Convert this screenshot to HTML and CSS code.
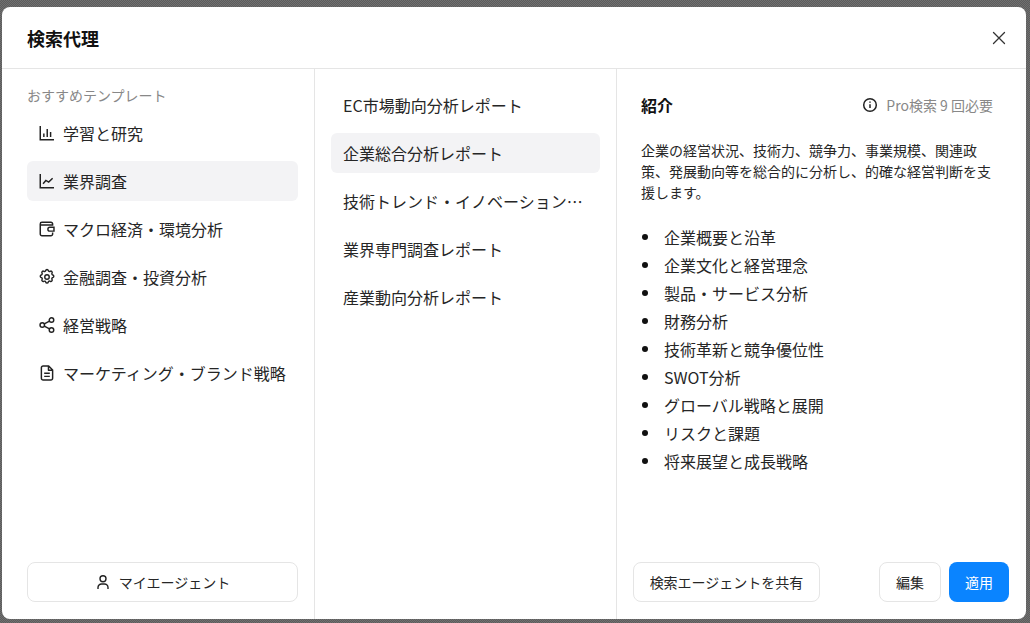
FILE: index.html
```html
<!DOCTYPE html>
<html lang="ja">
<head>
    <meta charset="UTF-8">
    <title>検索代理</title>
    <link rel="stylesheet" href="styles.css">
</head>
<body>
    <div class="modal">
        <div class="modal-header">
            <h2>検索代理</h2>
            <svg class="close-icon" width="20" height="20" viewBox="0 0 20 20" fill="none" stroke="#333" stroke-width="1.3" stroke-linecap="round"><path d="M4.500 4.500l11 11M15.500 4.500l-11 11"/></svg>
        </div>
        <div class="modal-body">
            <div class="col-left">
                <div class="section-label">おすすめテンプレート</div>
                <a class="cat-item">
                    <svg width="18" height="18" viewBox="0 0 16 16" fill="none" stroke="#222" stroke-width="1.3"><path d="M2 1.800V14h12.200M5.200 8.500v3M8.200 4.500v7M11.200 7v4.500"/></svg>
                    学習と研究
                </a>
                <a class="cat-item active">
                    <svg width="18" height="18" viewBox="0 0 16 16" fill="none" stroke="#222" stroke-width="1.3"><path d="M2 1.800V14h12.200M4.500 10.500l2.500-3 2.500 1.500 3.500-3.500"/></svg>
                    業界調査
                </a>
                <a class="cat-item">
                    <svg width="18" height="18" viewBox="0 0 16 16" fill="none" stroke="#222" stroke-width="1.3"><path d="M13 5V3.500A1.500 1.500 0 0 0 11.500 2h-8A1.500 1.500 0 0 0 2 3.500v9A1.500 1.500 0 0 0 3.500 14h8a1.500 1.500 0 0 0 1.500-1.500V11M2 4.500h11M14.200 6.500h-3.700a1.700 1.700 0 0 0 0 3.400h3.700z"/></svg>
                    マクロ経済・環境分析
                </a>
                <a class="cat-item">
                    <svg width="18" height="18" viewBox="0 0 24 24" fill="none" stroke="#222" stroke-width="1.900" stroke-linejoin="round"><path d="M10.300 3.300c.4-1.700 3-1.700 3.400 0a1.700 1.700 0 0 0 2.600 1.100c1.500-.9 3.300.8 2.400 2.400a1.700 1.700 0 0 0 1.100 2.500c1.700.4 1.700 3 0 3.400a1.700 1.700 0 0 0-1.100 2.600c.9 1.500-.8 3.300-2.400 2.400a1.700 1.700 0 0 0-2.600 1.100c-.4 1.700-3 1.700-3.400 0a1.700 1.700 0 0 0-2.500-1.100c-1.500.9-3.300-.8-2.400-2.400a1.700 1.700 0 0 0-1.100-2.600c-1.700-.4-1.700-3 0-3.400a1.700 1.700 0 0 0 1.100-2.500c-.9-1.500.8-3.300 2.400-2.400a1.700 1.700 0 0 0 2.500-1.100z"/><circle cx="12" cy="12" r="3"/></svg>
                    金融調査・投資分析
                </a>
                <a class="cat-item">
                    <svg width="18" height="18" viewBox="0 0 16 16" fill="none" stroke="#222" stroke-width="1.3"><circle cx="3.800" cy="8" r="2"/><circle cx="12" cy="3.600" r="2"/><circle cx="12" cy="12.400" r="2"/><path d="M5.600 7l4.600-2.500M5.600 9l4.600 2.500"/></svg>
                    経営戦略
                </a>
                <a class="cat-item">
                    <svg width="18" height="18" viewBox="0 0 16 16" fill="none" stroke="#222" stroke-width="1.3" stroke-linejoin="round"><path d="M9.500 1.800h-5A1.500 1.500 0 0 0 3 3.300v9.400a1.500 1.500 0 0 0 1.500 1.500h7a1.500 1.500 0 0 0 1.500-1.500V5.300zM9.300 2v3.500H13M5.500 8.300h5M5.500 11h5"/></svg>
                    マーケティング・ブランド戦略
                </a>
                <div class="col-footer">
                    <button class="btn btn-full">
                        <svg width="16" height="16" viewBox="0 0 16 16" fill="none" stroke="#222" stroke-width="1.4"><circle cx="8" cy="4.800" r="3"/><path d="M3 15v-1.500A3.500 3.500 0 0 1 6.500 10h3a3.500 3.500 0 0 1 3.500 3.500V15"/></svg>
                        マイエージェント
                    </button>
                </div>
            </div>
            <div class="col-mid">
                <a class="tpl-item">EC市場動向分析レポート</a>
                <a class="tpl-item active">企業総合分析レポート</a>
                <a class="tpl-item">技術トレンド・イノベーション分析レポート</a>
                <a class="tpl-item">業界専門調査レポート</a>
                <a class="tpl-item">産業動向分析レポート</a>
            </div>
            <div class="col-right">
                <div class="detail">
                    <div class="detail-head">
                        <h3>紹介</h3>
                        <div class="usage">
                            <svg width="16" height="16" viewBox="0 0 16 16" fill="none" stroke="#222" stroke-width="1.5"><circle cx="8" cy="8" r="6.300"/><path d="M8 7.300v3.700M8 4.600v1.200"/></svg>
                            Pro検索 9 回必要
                        </div>
                    </div>
                    <p class="desc">企業の経営状況、技術力、競争力、事業規模、関連政策、発展動向等を総合的に分析し、的確な経営判断を支援します。</p>
                    <ul class="outline">
                        <li>企業概要と沿革</li>
                        <li>企業文化と経営理念</li>
                        <li>製品・サービス分析</li>
                        <li>財務分析</li>
                        <li>技術革新と競争優位性</li>
                        <li>SWOT分析</li>
                        <li>グローバル戦略と展開</li>
                        <li>リスクと課題</li>
                        <li>将来展望と成長戦略</li>
                    </ul>
                </div>
                <div class="detail-footer">
                    <button class="btn btn-share">検索エージェントを共有</button>
                    <div class="footer-actions">
                        <button class="btn btn-edit">編集</button>
                        <button class="btn btn-apply">適用</button>
                    </div>
                </div>
            </div>
        </div>
    </div>
</body>
</html>
```

FILE: styles.css
```css
* {
    box-sizing: border-box;
}

body {
    margin: 0;
    height: 623px;
    overflow: hidden;
    padding: 7px 4px 4px 2px;
    background-color: #666;
    background-image: conic-gradient(#5c5c5c 25%, #707070 0 50%, #5c5c5c 0 75%, #707070 0);
    background-size: 2px 2px;
    font-family: "Noto Sans CJK JP", "Noto Sans", sans-serif;
    color: #262626;
}

.modal {
    height: 612px;
    display: flex;
    flex-direction: column;
    background-color: #fff;
    border-radius: 8px;
    overflow: hidden;
}

.modal-header {
    height: 62px;
    flex-shrink: 0;
    display: flex;
    align-items: center;
    justify-content: space-between;
    padding: 0 17px 0 25px;
    border-bottom: 1px solid #e5e5e5;
}

.modal-header h2 {
    margin: 0;
    font-size: 18px;
    font-weight: 700;
    color: #111;
}

.modal-body {
    flex: 1;
    display: flex;
    min-height: 0;
}

.col-left {
    width: 313px;
    display: flex;
    flex-direction: column;
    gap: 8px;
    padding: 16px 16px 17px 25px;
    border-right: 1px solid #e5e5e5;
}

.section-label {
    height: 20px;
    line-height: 20px;
    font-size: 14px;
    color: #888;
}

.cat-item {
    height: 40px;
    flex-shrink: 0;
    display: flex;
    align-items: center;
    gap: 7px;
    padding: 0 12px 0 11px;
    border-radius: 6px;
    font-size: 16px;
}

.cat-item svg {
    flex-shrink: 0;
}

.cat-item.active,
.tpl-item.active {
    background-color: #f3f3f5;
}

.col-footer {
    margin-top: auto;
}

.btn {
    height: 40px;
    display: flex;
    align-items: center;
    justify-content: center;
    gap: 8px;
    border: 1px solid #e5e5e5;
    border-radius: 8px;
    background-color: #fff;
    font-family: inherit;
    font-size: 14px;
    color: #262626;
}

.btn-full {
    width: 100%;
}

.col-mid {
    width: 302px;
    display: flex;
    flex-direction: column;
    gap: 8px;
    padding: 16px;
    border-right: 1px solid #e5e5e5;
}

.tpl-item {
    height: 40px;
    flex-shrink: 0;
    line-height: 40px;
    padding: 0 12px;
    border-radius: 6px;
    font-size: 16px;
    white-space: nowrap;
    overflow: hidden;
    text-overflow: ellipsis;
}

.col-right {
    flex: 1;
    display: flex;
    flex-direction: column;
    padding: 16px 17px 17px 16px;
}

.detail {
    flex: 1;
    padding: 0 16px 0 8px;
}

.detail-head {
    height: 40px;
    display: flex;
    align-items: center;
    justify-content: space-between;
}

.detail-head h3 {
    margin: 0;
    font-size: 16px;
    font-weight: 700;
    color: #111;
}

.usage {
    display: flex;
    align-items: center;
    gap: 8px;
    font-size: 14px;
    color: #888;
}

.desc {
    margin: 15px 0 0;
    font-size: 14px;
    line-height: 21px;
}

.outline {
    margin: 20px 0 0;
    padding: 0;
    list-style: none;
    font-size: 16px;
    line-height: 28px;
}

.outline li {
    display: flex;
    align-items: center;
}

.outline li::before {
    content: "";
    width: 6px;
    height: 6px;
    margin: 0 16px 0 1px;
    border-radius: 50%;
    background-color: #111;
}

.detail-footer {
    display: flex;
    justify-content: space-between;
}

.footer-actions {
    display: flex;
    gap: 8px;
}

.btn-share {
    width: 187px;
}

.btn-edit {
    width: 62px;
}

.btn-apply {
    width: 60px;
    border: none;
    background-color: #0a84ff;
    color: #fff;
}
```
